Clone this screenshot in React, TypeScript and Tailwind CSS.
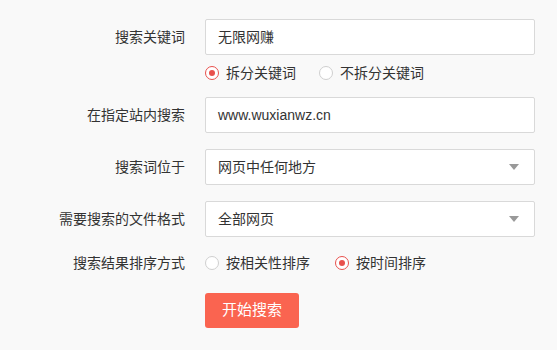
import React from "react";

const font = { fontFamily: '"Liberation Sans", "Noto Sans CJK SC", "Noto Sans", sans-serif' };

function Radio({ checked, label }: { checked: boolean; label: string }) {
  return (
    <label className="flex items-center gap-[7px]">
      <span
        className={
          "flex h-[14px] w-[14px] items-center justify-center rounded-full border bg-white " +
          (checked ? "border-[#e8504c]" : "border-[#cfcfcf]")
        }
      >
        {checked && <span className="h-[6px] w-[6px] rounded-full bg-[#e8504c]" />}
      </span>
      <span>{label}</span>
    </label>
  );
}

function Row({ label, children, h }: { label: string; children: React.ReactNode; h: string }) {
  return (
    <div className={"flex items-center " + h}>
      <div className="w-[186px] shrink-0 pr-[1px] text-right">{label}</div>
      <div className="ml-[19px] w-[330px]">{children}</div>
    </div>
  );
}

function Box({ children, arrow }: { children: React.ReactNode; arrow?: boolean }) {
  return (
    <div className="flex h-[36px] items-center justify-between rounded-[2px] border border-[#d9d9d9] bg-white pl-[12px] pr-[15px]">
      <span>{children}</span>
      {arrow && (
        <svg width="10" height="6" viewBox="0 0 10 6">
          <path d="M0 0 L10 0 L5 6 Z" fill="#999" />
        </svg>
      )}
    </div>
  );
}

export default function App() {
  return (
    <div className="h-[350px] w-[557px] bg-[#f9f9f9] pt-[19px] text-[14px] text-[#333]" style={font}>
      <Row label="搜索关键词" h="h-[36px]">
        <Box>无限网赚</Box>
      </Row>
      <div className="ml-[205px] flex h-[36px] items-center gap-[23px]">
        <Radio checked label="拆分关键词" />
        <Radio checked={false} label="不拆分关键词" />
      </div>
      <div className="mt-[6px]">
        <Row label="在指定站内搜索" h="h-[36px]">
          <Box>www.wuxianwz.cn</Box>
        </Row>
      </div>
      <div className="mt-[16px]">
        <Row label="搜索词位于" h="h-[36px]">
          <Box arrow>网页中任何地方</Box>
        </Row>
      </div>
      <div className="mt-[16px]">
        <Row label="需要搜索的文件格式" h="h-[36px]">
          <Box arrow>全部网页</Box>
        </Row>
      </div>
      <div className="mt-[8px]">
        <Row label="搜索结果排序方式" h="h-[36px]">
          <div className="flex items-center gap-[25px]">
            <Radio checked={false} label="按相关性排序" />
            <Radio checked label="按时间排序" />
          </div>
        </Row>
      </div>
      <div className="ml-[205px] mt-[12px]">
        <button className="h-[35px] w-[94px] rounded-[3px] bg-[#fa6450] text-[15px] text-white">开始搜索</button>
      </div>
    </div>
  );
}
